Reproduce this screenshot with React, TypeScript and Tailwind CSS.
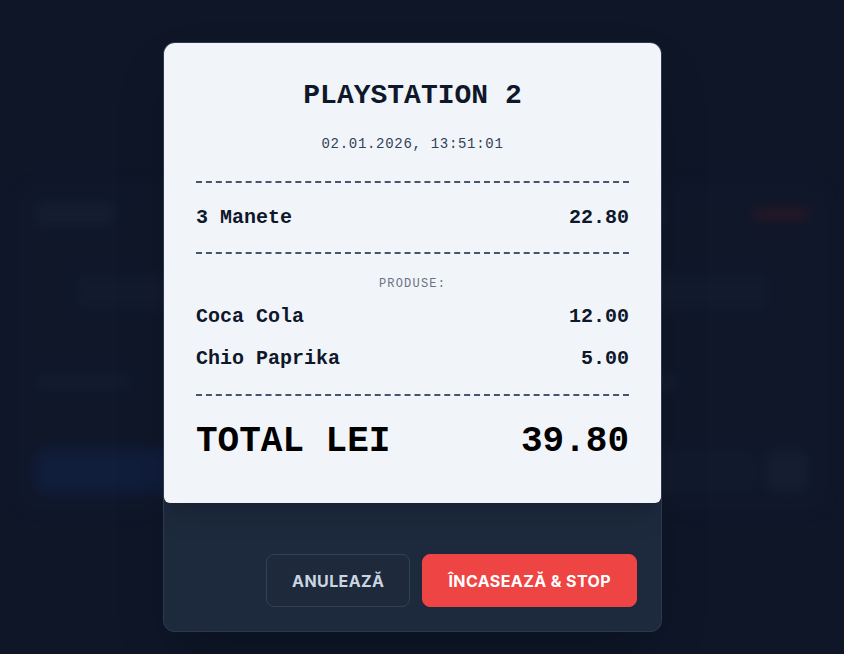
import React from 'react';

const mono = { fontFamily: '"Courier New", "Liberation Mono", monospace' };
const sans = { fontFamily: 'Inter, "Noto Sans", sans-serif' };

// blurred dashboard card behind the modal; its content is only shapes once blurred
function StationCard({ tone }: { tone: 'blue' | 'red' }) {
  return (
    <div className="flex h-[325px] flex-col rounded-2xl border border-slate-800/70 bg-[#111a2d] p-4">
      <div className="flex items-center justify-between">
        <div className="h-6 w-20 rounded-md bg-slate-700/40" />
        <div className={tone === 'red' ? 'h-3 w-14 rounded bg-red-900/50' : 'h-3 w-12 rounded bg-slate-700/40'} />
      </div>
      <div className="mx-auto mt-12 h-9 w-36 rounded-lg bg-slate-700/25" />
      <div className="mr-auto mt-16 h-4 w-24 rounded bg-slate-800/80" />
      <div className="mt-auto flex gap-2">
        {tone === 'blue' ? (
          <div className="h-11 flex-1 rounded-xl bg-blue-900/40" />
        ) : (
          <>
            <div className="h-11 flex-1 rounded-xl bg-slate-800/50" />
            <div className="h-11 w-11 rounded-xl bg-slate-700/40" />
          </>
        )}
      </div>
    </div>
  );
}

function Dashes() {
  return <div className="border-t-2 border-dashed border-slate-600" />;
}

function Row({ label, value }: { label: string; value: string }) {
  return (
    <div className="flex items-center justify-between text-xl font-bold leading-7 text-slate-900">
      <span>{label}</span>
      <span>{value}</span>
    </div>
  );
}

export default function App() {
  return (
    <div className="relative min-h-screen overflow-hidden bg-[#0f172a]" style={sans}>
      <div className="grid grid-cols-3 gap-4 px-[18px] pt-[185px] opacity-60 blur-[6px]">
        <StationCard tone="blue" />
        <StationCard tone="red" />
        <StationCard tone="red" />
      </div>
      <div className="absolute inset-0 bg-[#0b1222]/25" />

      {/* receipt modal */}
      <div className="absolute inset-0 pl-[163px] pt-[42px]">
        <div className="w-[499px] overflow-hidden rounded-xl border border-slate-700/70 bg-slate-800 shadow-2xl">
          <div className="relative z-10 rounded-b-md bg-slate-100 px-8 pb-[41px] pt-[37px] shadow-xl" style={mono}>
            <div className="text-center text-[28px] font-bold leading-8 text-slate-900">PLAYSTATION 2</div>
            <div className="mt-[22px] text-center text-sm leading-5 tracking-wider text-slate-700">
              02.01.2026, 13:51:01
            </div>
            <div className="mt-[27px]">
              <Dashes />
            </div>
            <div className="mt-[21px]">
              <Row label="3 Manete" value="22.80" />
            </div>
            <div className="mt-[20px]">
              <Dashes />
            </div>
            <div className="mt-[22px] text-center text-xs uppercase leading-4 tracking-widest text-gray-500">Produse:</div>
            <div className="mt-[11px]">
              <Row label="Coca Cola" value="12.00" />
            </div>
            <div className="mt-[14px]">
              <Row label="Chio Paprika" value="5.00" />
            </div>
            <div className="mt-[21px]">
              <Dashes />
            </div>
            <div className="mt-[26px] flex items-center justify-between text-4xl font-bold leading-10 text-black">
              <span>TOTAL LEI</span>
              <span>39.80</span>
            </div>
          </div>
          <div className="flex justify-end gap-3 px-6 pb-6 pt-[51px]">
            <button className="h-[53px] rounded-lg border border-slate-700 bg-[#1e293b] px-[25px] text-base font-bold tracking-wide text-slate-300">
              ANULEAZĂ
            </button>
            <button className="h-[53px] rounded-lg border border-[#ef4444] bg-[#ef4444] px-[25px] text-base font-bold tracking-wide text-white">
              ÎNCASEAZĂ &amp; STOP
            </button>
          </div>
        </div>
      </div>
    </div>
  );
}
